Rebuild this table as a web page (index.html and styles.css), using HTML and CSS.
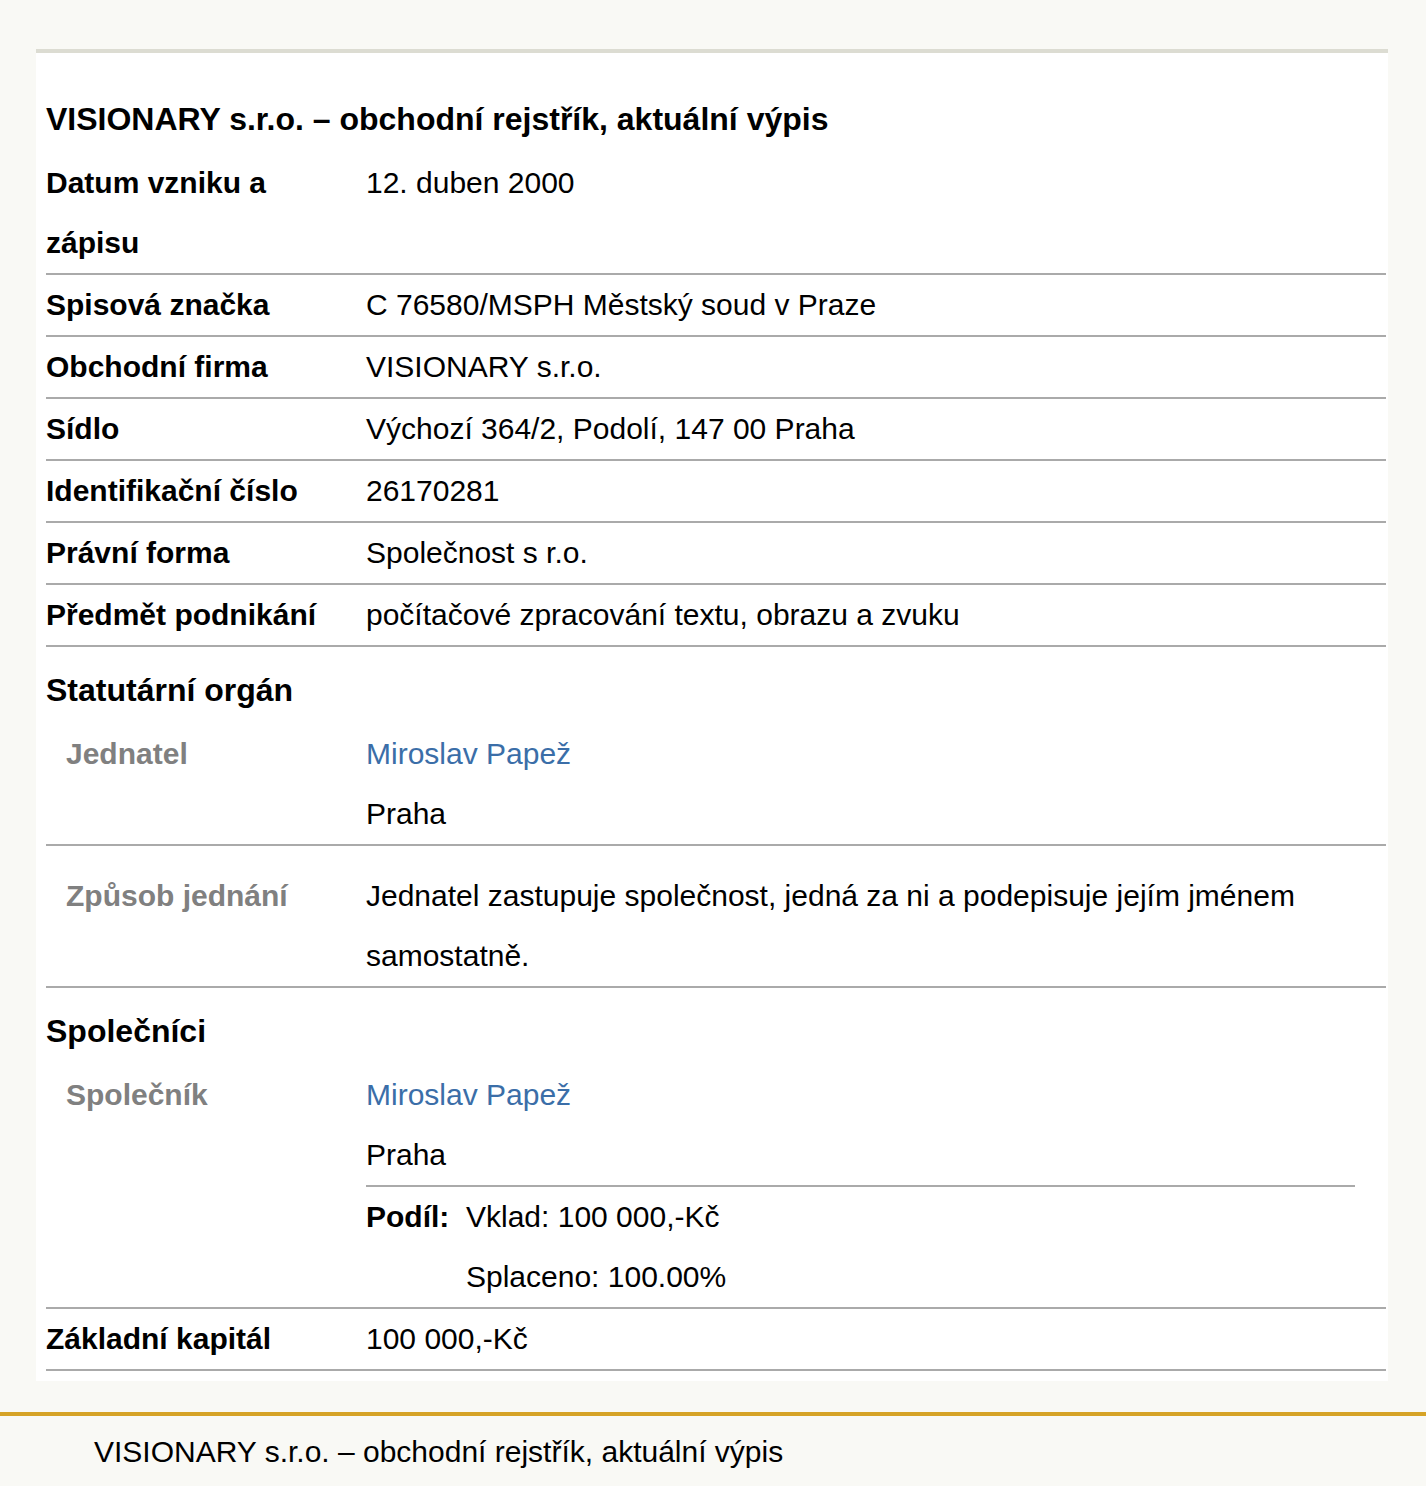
FILE: index.html
```html
<!DOCTYPE html>
<html lang="cs">
<head>
<meta charset="utf-8">
<title>VISIONARY s.r.o. – obchodní rejstřík, aktuální výpis</title>
<link rel="stylesheet" href="styles.css">
</head>
<body>
<div class="page">
  <main class="card">
    <h1 class="title">VISIONARY s.r.o. – obchodní rejstřík, aktuální výpis</h1>

    <div class="row"><div class="label">Datum vzniku a zápisu</div><div class="value">12. duben 2000</div></div>
    <div class="row"><div class="label">Spisová značka</div><div class="value">C 76580/MSPH Městský soud v Praze</div></div>
    <div class="row"><div class="label">Obchodní firma</div><div class="value">VISIONARY s.r.o.</div></div>
    <div class="row"><div class="label">Sídlo</div><div class="value">Výchozí 364/2, Podolí, 147 00 Praha</div></div>
    <div class="row"><div class="label">Identifikační číslo</div><div class="value">26170281</div></div>
    <div class="row"><div class="label">Právní forma</div><div class="value">Společnost s r.o.</div></div>
    <div class="row"><div class="label">Předmět podnikání</div><div class="value">počítačové zpracování textu, obrazu a zvuku</div></div>

    <section class="group">
      <h2 class="group-title">Statutární orgán</h2>
      <div class="row sub">
        <div class="label muted">Jednatel</div>
        <div class="value"><a class="link" href="#">Miroslav Papež</a><div>Praha</div></div>
      </div>
      <div class="row sub">
        <div class="label muted">Způsob jednání</div>
        <div class="value">Jednatel zastupuje společnost, jedná za ni a podepisuje jejím jménem samostatně.</div>
      </div>
    </section>

    <section class="group">
      <h2 class="group-title">Společníci</h2>
      <div class="row sub">
        <div class="label muted">Společník</div>
        <div class="value">
          <a class="link" href="#">Miroslav Papež</a>
          <div class="addr">Praha</div>
          <div class="share">
            <div class="share-label">Podíl:</div>
            <div class="share-value"><div>Vklad: 100 000,-Kč</div><div>Splaceno: 100.00%</div></div>
          </div>
        </div>
      </div>
    </section>

    <div class="row"><div class="label">Základní kapitál</div><div class="value">100 000,-Kč</div></div>
  </main>

  <footer class="footer">VISIONARY s.r.o. – obchodní rejstřík, aktuální výpis</footer>
</div>
</body>
</html>
```

FILE: styles.css
```css
html, body {
  margin: 0;
  padding: 0;
  background: #f9f9f5;
}

body {
  font-family: "Liberation Sans", Arial, sans-serif;
  font-size: 30px;
  color: #000;
}

.page {
  padding-top: 49px;
}

.card {
  margin: 0 38px 0 36px;
  background: #fff;
  border-top: 4px solid #dcdcd2;
  padding: 0 2px 10px 10px;
}

.title {
  margin: 0 0 18px;
  padding-top: 50px;
  font-size: 32px;
  line-height: 32px;
  font-weight: bold;
}

.row {
  display: grid;
  grid-template-columns: 320px 1fr;
  line-height: 60px;
  border-bottom: 2px solid #aaa;
}

.label {
  font-weight: bold;
  padding-right: 12px;
}

.value {
  min-width: 0;
}

.row.sub {
  padding-top: 20px;
}

.row.sub .label {
  padding-left: 20px;
}

.muted {
  color: #808080;
}

.link {
  color: #3b6ea8;
  text-decoration: none;
}

.group-title {
  margin: 0;
  padding-top: 29px;
  font-size: 32px;
  line-height: 28px;
  font-weight: bold;
}

.addr {
  border-bottom: 2px solid #aaa;
  margin-right: 31px;
}

.share {
  display: grid;
  grid-template-columns: 100px 1fr;
}

.share-label {
  font-weight: bold;
}

.footer {
  margin-top: 31px;
  border-top: 4px solid #d6a326;
  padding: 19px 0 16px 94px;
  line-height: 34px;
}
```
